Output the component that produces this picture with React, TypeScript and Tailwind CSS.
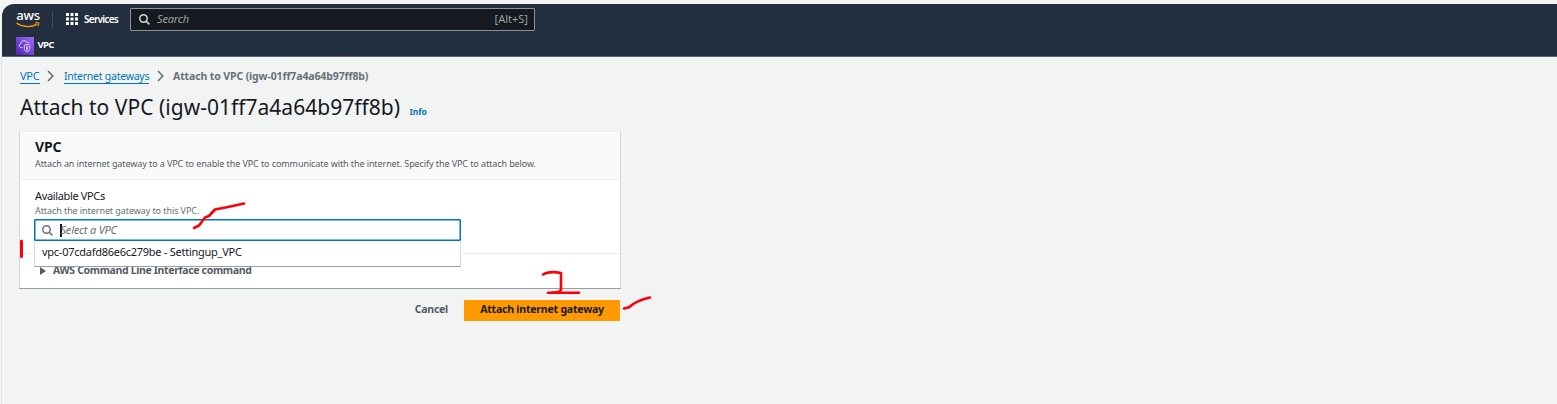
import React from "react";

function AwsLogo() {
  return (
    <div className="flex w-[24px] flex-col items-center">
      <span className="h-[10px] text-[13px] leading-[9px] font-medium tracking-[-0.3px] text-white">aws</span>
      <svg width="24" height="6" viewBox="0 0 24 6" fill="none" stroke="#ff9900" className="mt-px">
        <path d="M0.5 1C6 5.3 15 5.8 21 2.2" strokeWidth="1.4" />
        <path d="M19.3 0.9C21 0.5 22.6 0.6 22.8 1.1C23 1.8 22.4 3.2 21.6 4.1" strokeWidth="1.1" />
      </svg>
    </div>
  );
}

function GridIcon() {
  return (
    <svg width="12" height="12" viewBox="0 0 12 12" fill="#fff">
      {[0, 4.5, 9].map((y) =>
        [0, 4.5, 9].map((x) => <rect key={`${x}-${y}`} x={x} y={y} width="3" height="3" />)
      )}
    </svg>
  );
}

function SearchIcon({ className }: { className: string }) {
  return (
    <svg width="11" height="11" viewBox="0 0 11 11" fill="none" stroke="currentColor" className={className}>
      <circle cx="4.5" cy="4.5" r="3.7" strokeWidth="1.5" />
      <path d="M7.2 7.2L10.4 10.4" strokeWidth="1.6" />
    </svg>
  );
}

function VpcIcon() {
  return (
    <svg width="18" height="18" viewBox="0 0 18 18" fill="none">
      <defs>
        <linearGradient id="vpc" x1="0" y1="18" x2="18" y2="0" gradientUnits="userSpaceOnUse">
          <stop stopColor="#4d27a8" />
          <stop offset="1" stopColor="#a166ff" />
        </linearGradient>
      </defs>
      <rect width="18" height="18" fill="url(#vpc)" />
      <g stroke="#e9defc" strokeWidth="0.9" strokeLinejoin="round">
        <path d="M6.6 10.600H5.400C4 10.600 3.300 9.700 3.300 8.700C3.300 7.600 4 6.900 5 6.700C5 4.800 6.200 3.600 7.900 3.600C9.400 3.600 10.300 4.300 10.900 5.300C12.300 5 13.200 5.500 13.400 6.400" />
        <path d="M11 7.300L13.700 8.400V11.600C13.700 13.300 12.400 14.300 11 14.900C9.600 14.300 8.300 13.300 8.300 11.600V8.400Z" />
        <path d="M11 9.300V13.200" strokeWidth="1.400" />
      </g>
    </svg>
  );
}

function Chevron() {
  return (
    <svg width="7" height="12" viewBox="0 0 7 12" fill="none" stroke="#687078" strokeWidth="1.6">
      <path d="M1 1L5.8 6L1 11" />
    </svg>
  );
}

function Annotations() {
  return (
    <svg
      width="660"
      height="330"
      viewBox="0 0 660 330"
      fill="none"
      stroke="#fc0008"
      strokeWidth="2.6"
      strokeLinecap="round"
      strokeLinejoin="round"
      className="pointer-events-none absolute top-0 left-0"
    >
      <path d="M194 228L199 225.500L205 217.500L209 216L215 209.500L228 207L244 203.500" />
      <path d="M21.500 241V256.500" strokeWidth="3" />
      <path d="M543 274.500C547 272 552 271.300 561 273V290C560 292 557 292.500 553 292.500" />
      <path d="M548 292.800H579" />
      <path d="M624 308.500L629 307.300C634 302.500 641 299.500 650 297.500" />
    </svg>
  );
}

export default function App() {
  return (
    <div className="relative flex h-[404px] w-[1557px] flex-col overflow-hidden bg-[#f2f3f3] font-['Noto_Sans','Open_Sans',sans-serif] text-[#16191f]">
      <div className="h-[4px] shrink-0 bg-[#f5f5f6]" />
      <header className="ml-[2px] flex h-[53px] shrink-0 flex-col rounded-tl-[12px] border-b border-[#5b6270] bg-[#232f3e]">
        <div className="flex h-[31px] items-center pl-[14px]">
          <AwsLogo />
          <div className="ml-[12px] h-[17px] w-px bg-[#414d5c]" />
          <div className="ml-[13px] flex items-center pb-px">
            <GridIcon />
          </div>
          <span className="ml-[6px] w-[46px] text-[10px] font-semibold tracking-[-0.73px] whitespace-nowrap text-white">Services</span>
          <div className="flex h-[23px] w-[405px] items-center rounded-[1px] border border-[#879596] bg-[#16191f] pr-[6px] pl-[8px]">
            <SearchIcon className="text-[#d5dbdb]" />
            <span className="ml-[7px] text-[11px] tracking-[-0.15px] text-[#95a5a6] italic">Search</span>
            <span className="ml-auto text-[11px] text-[#95a5a6]">[Alt+S]</span>
          </div>
        </div>
        <div className="flex h-[21px] items-center pl-[14px]">
          <VpcIcon />
          <span className="ml-[3.500px] text-[9.500px] font-bold tracking-[-0.6px] text-white">VPC</span>
        </div>
      </header>

      <main className="ml-[1px] flex flex-1 flex-col border-l border-[#e3e5e6] pl-[18px]">
        <nav className="mt-[10px] flex h-[17px] items-center text-[11px] whitespace-nowrap">
          <a className="h-[16px] w-[20px] border-b border-[#0073bb] leading-[16px] tracking-[-0.3px] text-[#0073bb]">VPC</a>
          <span className="ml-[7px]"><Chevron /></span>
          <a className="ml-[10px] h-[16px] w-[85px] border-b border-[#0073bb] text-[10.500px] leading-[16px] tracking-[-0.25px] text-[#0073bb]">Internet gateways</a>
          <span className="ml-[8px]"><Chevron /></span>
          <span className="ml-[9px] text-[10.500px] leading-[16px] font-bold tracking-[-0.12px] text-[#687078]">Attach to VPC (igw-01ff7a4a64b97ff8b)</span>
        </nav>

        <div className="mt-[9px] flex h-[28px] items-baseline whitespace-nowrap">
          <h1 className="w-[389.500px] text-[21px] leading-[28px] tracking-[0.02px]">Attach to VPC (igw-01ff7a4a64b97ff8b)</h1>
          <a className="text-[8.500px] font-bold text-[#0073bb]">Info</a>
        </div>

        <section className="mt-[10px] -ml-px flex h-[158px] w-[602px] flex-col border border-t-[#eaeded] border-r-[#d5dbdb] border-b-[#95a0a5] border-l-[#d5dbdb] bg-white">
          <div className="h-[48px] shrink-0 border-b border-[#eaeded] bg-[#fafafa] pt-[6px] pl-[15px] whitespace-nowrap">
            <h2 className="text-[14px] leading-[18px] font-bold tracking-[-0.2px]">VPC</h2>
            <p className="pt-px text-[9px] leading-[14px] tracking-[-0.09px] text-[#545b64]">
              Attach an internet gateway to a VPC to enable the VPC to communicate with the internet. Specify the VPC to attach below.
            </p>
          </div>
          <div className="flex h-[74px] shrink-0 flex-col border-b border-[#eaeded] pt-[8px] pl-[15px] whitespace-nowrap">
            <label className="text-[11px] leading-[16px] tracking-[-0.35px]">Available VPCs</label>
            <p className="text-[9px] leading-[14px] tracking-[-0.08px] text-[#687078]">Attach the internet gateway to this VPC.</p>
            <div className="relative -ml-px mt-px">
              <div className="flex h-[22px] w-[427px] items-center rounded-[1px] border-[1.500px] border-[#0073bb] bg-white pl-[7px] shadow-[inset_0_0_0_0.5px_#0073bb]">
                <SearchIcon className="text-[#687078]" />
                <div className="ml-[7px] h-[13px] w-[1.500px] bg-[#16191f]" />
                <span className="-ml-px text-[11px] tracking-[-0.2px] text-[#687078] italic">Select a VPC</span>
              </div>
              <div className="absolute top-[22px] left-0 z-10 flex h-[26px] w-[427px] items-center border-x border-b border-x-[#d5dbdb] border-b-[#95a0a5] bg-white pb-[3px] pl-[7px] text-[11px] tracking-[-0.26px]">
                vpc-07cdafd86e6c279be - Settingup_VPC
              </div>
            </div>
          </div>
          <div className="flex flex-1 items-center pl-[20px] text-[#545b64]">
            <svg width="6" height="8" viewBox="0 0 6 8" fill="currentColor">
              <path d="M0 0L6 4L0 8Z" />
            </svg>
            <span className="ml-[7px] pb-px text-[10.500px] font-bold tracking-[-0.34px] whitespace-nowrap">AWS Command Line Interface command</span>
          </div>
        </section>

        <div className="mt-[11px] flex h-[21px] w-[600px] items-center justify-end whitespace-nowrap">
          <button className="pb-[2px] text-[10.500px] font-bold tracking-[-0.25px] text-[#545b64]">Cancel</button>
          <button className="ml-[16px] h-[21px] w-[156px] rounded-[1px] bg-[#ff9900] pb-[2px] text-[10.500px] font-bold tracking-[-0.2px] text-[#16191f]">Attach internet gateway</button>
        </div>
      </main>
      <Annotations />
    </div>
  );
}
